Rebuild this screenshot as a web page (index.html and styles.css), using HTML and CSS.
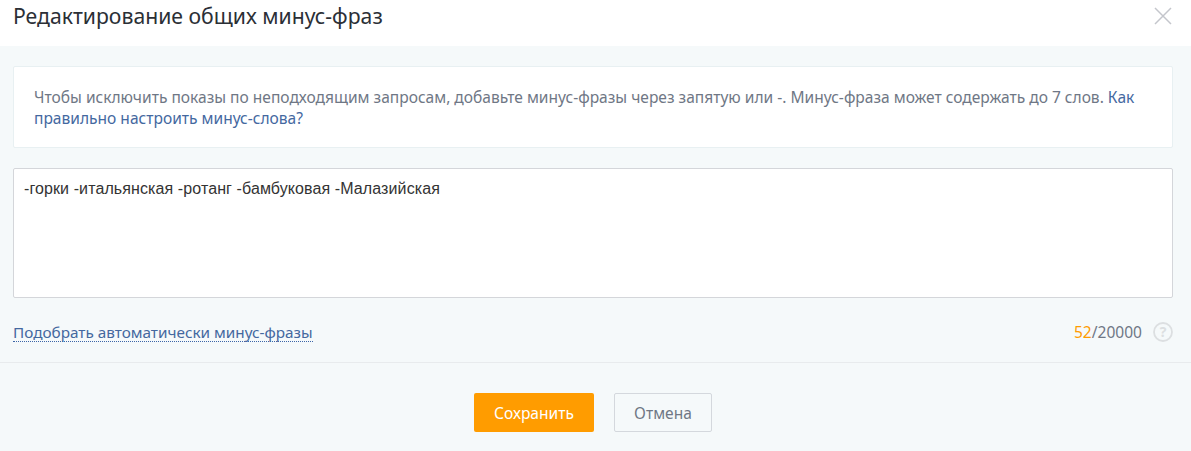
FILE: index.html
```html
<!DOCTYPE html>
<html lang="ru">
<head>
<meta charset="utf-8">
<title>Редактирование общих минус-фраз</title>
<link rel="stylesheet" href="styles.css">
</head>
<body>
<div class="dialog">
  <header class="head">
    <h1 class="title">Редактирование общих минус-фраз</h1>
    <svg class="close" width="18" height="18" viewBox="0 0 18 18"><path d="M1 1L17 17M17 1L1 17" stroke="#c4c6cc" stroke-width="1.5" fill="none"/></svg>
  </header>
  <main class="body">
    <div class="notice">Чтобы исключить показы по неподходящим запросам, добавьте минус-фразы через запятую или -. Минус-фраза может содержать до 7 слов. <a class="link" href="#">Как правильно настроить минус-слова?</a></div>
    <div class="editor">-горки -итальянская -ротанг -бамбуковая -Малазийская</div>
    <div class="tools">
      <a class="auto" href="#">Подобрать автоматически минус-фразы</a>
      <div class="count"><span class="nums"><span class="used">52</span>/20000</span>
        <svg class="help" width="20" height="20" viewBox="0 0 20 20"><circle cx="10" cy="10" r="9" fill="none" stroke="#dcdfe1" stroke-width="1.8"/><text x="10" y="15" text-anchor="middle" class="mark">?</text></svg>
      </div>
    </div>
  </main>
  <footer class="foot">
    <button class="btn primary">Сохранить</button>
    <button class="btn ghost">Отмена</button>
  </footer>
</div>
</body>
</html>
```
FILE: styles.css
```css
* { box-sizing: border-box; }
html, body { margin: 0; height: 100%; }
body { font-family: "Noto Sans", sans-serif; font-size: 15.55px; color: #6f7785; background: #f5f9fa; overflow: hidden; }
.dialog { display: flex; flex-direction: column; height: 451px; }
.head { height: 46px; background: #fff; display: flex; justify-content: space-between; align-items: flex-start; padding: 0 19px 0 13px; flex: none; }
.title { margin: 0; font-weight: 400; font-size: 21.2px; line-height: 31px; color: #2b2f36; }
.close { margin-top: 7px; }
.body { padding: 20px 18px 0 13px; flex: none; height: 317px; border-bottom: 1px solid #e8ebed; }
.notice { height: 82px; background: #fff; border: 1px solid #e8f0f2; border-radius: 2px; padding: 20px 20px; line-height: 21px; }
.link { color: #44689f; text-decoration: none; }
.editor { height: 130px; margin-top: 20px; background: #fff; border: 1px solid #d4d6da; border-radius: 2px; padding: 10px 10px; font-family: "Liberation Sans", sans-serif; font-size: 16px; letter-spacing: .1px; line-height: 20px; color: #333; }
.tools { display: flex; justify-content: space-between; align-items: center; margin-top: 23px; height: 22px; }
.auto { color: #44689f; text-decoration: none; border-bottom: 1px dotted #3d66a8; line-height: 18px; font-size: 15.3px; }
.count { display: flex; align-items: center; gap: 11px; color: #6f7785; }
.used { color: #ff9c00; }
.help { display: block; }
.mark { font-size: 14px; fill: #dcdfe1; font-weight: 700; }
.foot { display: flex; justify-content: center; gap: 20px; padding: 30px 5px 0 0; }
.btn { height: 39px; border-radius: 2px; font: inherit; cursor: pointer; }
.primary { width: 120px; background: #ff9c00; border: 0; color: #fff; }
.ghost { width: 98px; background: transparent; border: 1px solid #d4d8dd; color: #6f7785; }
```
